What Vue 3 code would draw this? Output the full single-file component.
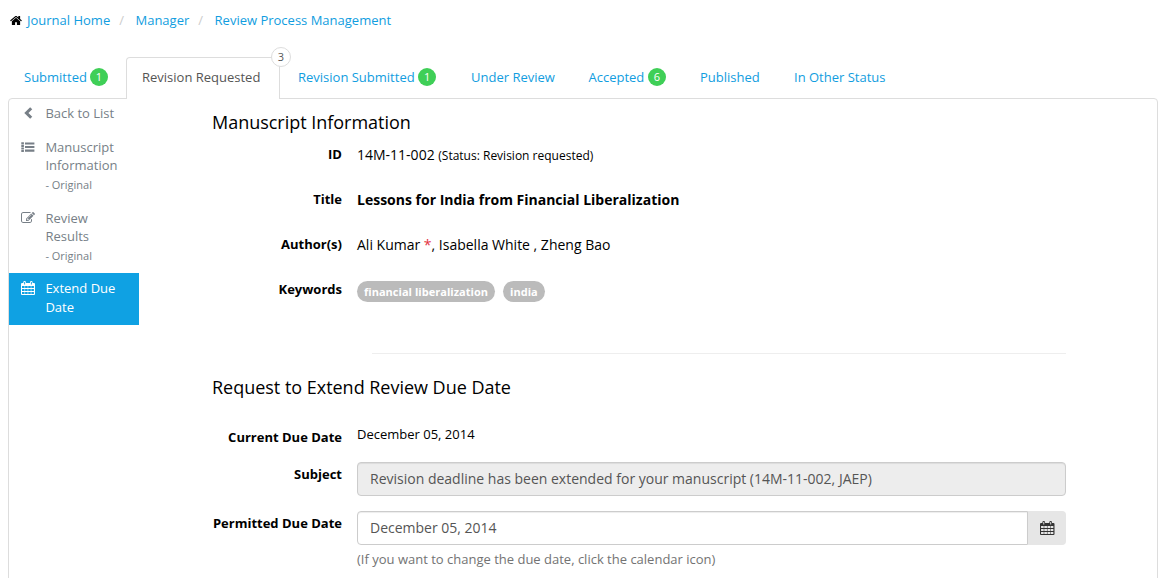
<script setup>
const home = 'M1472 992v480q0 26-19 45t-45 19h-384v-384h-256v384h-384q-26 0-45-19t-19-45v-480q0-1 .5-3t.5-3l575-474 575 474q1 2 1 6zm223-69l-62 74q-8 9-21 11h-3q-13 0-21-7l-692-577-692 577q-12 8-24 7-13-2-21-11l-62-74q-8-10-7-23.5t11-21.5l719-599q32-26 76-26t76 26l244 204v-195q0-14 9-23t23-9h192q14 0 23 9t9 23v408l219 182q10 8 11 21.5t-7 23.5z'
const chevron = 'M10.2 2.2L5.4 7l4.8 4.8'
const list = 'M.3 2.2h2.6v2.2H.3zM.3 4.9h2.6v2H.3zM.3 7.4h2.6v2H.3zM.3 9.9h2.6v2H.3zM4 2.4h9.4v2.1H4zM4 6h9.4v2.1H4zM4 9.6h9.4v2.1H4z'
const edit = 'M888 1184l116-116-152-152-116 116v56h96v96h56zm440-720q-16-16-33 1l-350 350q-17 17-1 33t33-1l350-350q17-17 1-33zm80 594v190q0 119-84.5 203.5t-203.5 84.5h-832q-119 0-203.5-84.5t-84.5-203.5v-832q0-119 84.5-203.5t203.5-84.5h832q63 0 117 25 15 7 18 23 3 17-9 29l-49 49q-14 14-32 8-23-6-45-6h-832q-66 0-113 47t-47 113v832q0 66 47 113t113 47h832q66 0 113-47t47-113v-126q0-13 9-22l64-64q15-15 35-7t20 29zm-96-738l288 288-672 672h-288v-288zm444 132l-92 92-288-288 92-92q28-28 68-28t68 28l152 152q28 28 28 68t-28 68z'
// Calendar: body with a 4x3 grid of cells cut out, plus two binder rings
const cells = [5, 8, 11].map(y => [1, 4.1, 7.2, 10.3].map(x => `M${x} ${y}v2h2.6v-2z`).join('')).join('')
const calendar = `M1 2H2.3V1.2Q2.3 0 3.6 0T4.9 1.2V2H9V1.2Q9 0 10.3 0T11.6 1.2V2H13Q14 2 14 3V13Q14 14 13 14H1Q0 14 0 13V3Q0 2 1 2z${cells}M3.2 1v2.4h.9V1zM9.9 1v2.4h.9V1z`

const tabs = [
  { label: 'Submitted', count: 1 },
  { label: 'Revision Requested', count: 3, active: true },
  { label: 'Revision Submitted', count: 1 },
  { label: 'Under Review' },
  { label: 'Accepted', count: 6 },
  { label: 'Published' },
  { label: 'In Other Status' },
]

const menu = [
  { icon: chevron, box: '0 0 14 14', lines: ['Back to List'], cls: 'back' },
  { icon: list, box: '0 0 14 14', lines: ['Manuscript', 'Information'], note: '- Original' },
  { icon: edit, box: '0 0 1792 1792', lines: ['Review', 'Results'], note: '- Original' },
  { icon: calendar, box: '0 0 14 14', lines: ['Extend Due', 'Date'], cls: 'current' },
]
</script>

<template>
  <div class="page">
    <nav class="crumbs">
      <svg class="home" viewBox="64 128 1664 1536"><path :d="home" /></svg>
      <a>Journal Home</a><i>/</i><a>Manager</a><i>/</i><a>Review Process Management</a>
    </nav>

    <ul class="tabs">
      <li v-for="t in tabs" :key="t.label" :class="{ active: t.active }">
        <span>{{ t.label }}</span>
        <b v-if="t.count" :class="t.active ? 'corner' : 'badge'">{{ t.count }}</b>
      </li>
    </ul>

    <div class="panel">
      <aside>
        <div v-for="m in menu" :key="m.lines[0]" class="item" :class="m.cls">
          <svg :viewBox="m.box"><path :d="m.icon" fill-rule="evenodd" /></svg>
          <div>
            <div v-for="l in m.lines" :key="l" class="line">{{ l }}</div>
            <div v-if="m.note" class="note">{{ m.note }}</div>
          </div>
        </div>
      </aside>

      <main>
        <h2>Manuscript Information</h2>
        <div class="row info">
          <label>ID</label>
          <p><span class="msid">14M-11-002</span> <small>(Status: Revision requested)</small></p>
        </div>
        <div class="row info">
          <label>Title</label>
          <p><strong>Lessons for India from Financial Liberalization</strong></p>
        </div>
        <div class="row info">
          <label>Author(s)</label>
          <p class="authors">Ali Kumar <em>*</em>, Isabella White , Zheng Bao</p>
        </div>
        <div class="row info">
          <label>Keywords</label>
          <div class="pills"><span>financial liberalization</span><span>india</span></div>
        </div>
        <hr />
        <h2 class="second">Request to Extend Review Due Date</h2>
        <div class="row due">
          <label>Current Due Date</label>
          <p class="date">December 05, 2014</p>
        </div>
        <div class="row subject">
          <label>Subject</label>
          <div class="field disabled">Revision deadline has been extended for your manuscript (14M-11-002, JAEP)</div>
        </div>
        <div class="row permitted">
          <label>Permitted Due Date</label>
          <div>
            <div class="group">
              <div class="field">December 05, 2014</div>
              <button><svg viewBox="0 0 14 14" preserveAspectRatio="none"><path :d="calendar" fill-rule="evenodd" /></svg></button>
            </div>
            <p class="help">(If you want to change the due date, click the calendar icon)</p>
          </div>
        </div>
      </main>
    </div>
  </div>
</template>

<style>
body { margin: 0; overflow: hidden; background: #fff; }
</style>

<style scoped>
* { box-sizing: border-box; }
.page {
  height: 578px;
  overflow: hidden;
  padding: 0 8px;
  font: 13px/18px "Open Sans", "Noto Sans", sans-serif;
  color: #000;
}
svg { fill: currentColor; display: block; flex: none; }
p, h2 { margin: 0; font-weight: 400; }
.crumbs { display: flex; align-items: center; height: 39px; padding-left: 2px; color: #119de0; }
.crumbs .home { width: 12px; height: 11px; color: #000; margin: 1px 5px 0 0; }
.crumbs i { color: #ccc; font-style: normal; margin: 0 11.5px 0 9px; }
.tabs {
  display: grid;
  grid-template-columns: 118px 156px 173px 117.5px 111.5px 94px 140px;
  list-style: none;
  margin: 18px 0 0;
  padding: 0;
  height: 41px;
}
.tabs li {
  position: relative;
  display: flex;
  align-items: center;
  height: 41px;
  padding: 0 0 1px 16px;
  color: #119de0;
  white-space: nowrap;
}
.tabs .active {
  z-index: 1;
  height: 42px;
  width: 154px;
  padding: 0 0 3px 15px;
  background: #fff;
  border: 1px solid #ddd;
  border-bottom: 0;
  border-radius: 4px 4px 0 0;
  color: #555;
}
.badge {
  width: 18px;
  height: 18px;
  margin-left: 3.5px;
  border-radius: 50%;
  background: #3fcf57;
  color: #fff;
  font: 11px/18px "Open Sans", sans-serif;
  text-align: center;
}
.tabs li:first-child .badge { margin-left: 3px; }
.corner {
  position: absolute;
  right: -12px;
  top: -11px;
  width: 20px;
  height: 20px;
  border: 1px solid #ddd;
  border-radius: 50%;
  background: #fff;
  color: #555;
  font: 11px/18px "Open Sans", sans-serif;
  text-align: center;
}
.panel {
  display: flex;
  height: 500px;
  border: 1px solid #ddd;
  border-radius: 4px;
}
aside { width: 130px; flex: none; color: #777f87; }
.item { display: flex; padding-left: 12px; margin-bottom: 16px; }
.item svg { width: 14px; height: 14px; margin: 2px 10.4px 0 0; }
.back { padding-top: 5px; }
.back svg { fill: none; stroke: currentColor; stroke-width: 3; }
.note { font-size: 11px; line-height: 19px; margin-top: 1px; }
.item:nth-child(2) { margin-bottom: 15px; }
.item:nth-child(3) { margin-bottom: 8px; }
.current { background: #0fa1e3; color: #fff; height: 52px; padding-top: 6px; margin: 0; }
.current .line { line-height: 19px; }
main { width: 854px; margin-left: 73px; }
h2 { font-size: 18px; line-height: 24px; padding-top: 11px; letter-spacing: -.02px; }
.row { display: grid; grid-template-columns: 130px 709px; column-gap: 15px; }
label { font-weight: 700; text-align: right; }
.info { height: 45px; padding-top: 11px; }
.info p { font-size: 14px; line-height: 20px; }
small { font-size: 12px; }
em { color: #e33244; font-style: normal; }
.pills { display: flex; gap: 8px; padding-top: 1px; }
.pills span {
  height: 21px;
  padding: 0 7px;
  border-radius: 11px;
  background: #bbb;
  color: #fff;
  font-size: 11px;
  font-weight: 700;
  line-height: 22px;
  letter-spacing: .03px;
}
hr { margin: 39px 0 0 160px; border: 0; border-top: 1px solid #eee; }
h2.second { padding-top: 21px; }
.due { padding-top: 26px; }
.due label { padding-top: 3px; }
.subject { margin-top: 16px; }
.subject label { padding-top: 3px; }
.permitted { margin-top: 15px; }
.permitted label { padding-top: 3px; }
.field {
  height: 34px;
  padding: 0 12px;
  border: 1px solid #ccc;
  border-radius: 4px;
  box-shadow: inset 0 1px 1px rgba(0, 0, 0, .075);
  color: #555;
  font-size: 14px;
  line-height: 32px;
}
.disabled { background: #ededed; }
.group { display: flex; }
.group .field { width: 671px; border-radius: 4px 0 0 4px; }
.group button {
  width: 38px;
  height: 34px;
  padding: 0 0 0 12px;
  border: 0;
  border-radius: 0 4px 4px 0;
  background: #e6e6e6;
  color: #333;
}
.group svg { width: 14.5px; height: 14px; }
.help { color: #737373; margin-top: 5px; }
</style>
